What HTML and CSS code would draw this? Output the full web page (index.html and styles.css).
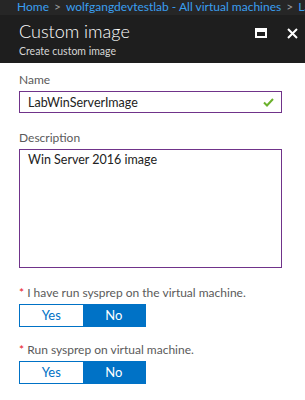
FILE: index.html
```html
<!DOCTYPE html>
<html lang="en">

<head>
    <meta charset="UTF-8">
    <meta name="viewport" content="width=device-width, initial-scale=1.0">
    <title>Custom image</title>
    <link rel="stylesheet" href="styles.css">
</head>

<body>
    <div class="crumbs">
        <span class="crumb">Home</span>
        <span class="sep">&gt;</span>
        <span class="crumb">wolfgangdevtestlab - All virtual machines</span>
        <span class="sep">&gt;</span>
        <span class="crumb">LabWinServer</span>
    </div>
    <div class="head">
        <div class="titles">
            <div class="title">Custom image</div>
            <div class="subtitle">Create custom image</div>
        </div>
        <div class="tools">
            <svg class="icon" width="12" height="10" viewBox="0 0 12 10">
                <rect x="1" y="1" width="10" height="8" fill="none" stroke="#fff" stroke-width="2"/>
                <rect x="1" y="1" width="10" height="3" fill="#fff"/>
            </svg>
            <svg class="icon" width="11" height="11" viewBox="0 0 11 11">
                <path d="M1 1L10 10M10 1L1 10" stroke="#fff" stroke-width="2"/>
            </svg>
        </div>
    </div>
    <div class="form">
        <div class="field">
            <div class="label">Name</div>
            <div class="input">
                <span>LabWinServerImage</span>
                <svg width="11" height="9" viewBox="0 0 11 9">
                    <path d="M1 4.5L4 7.5L10 1" fill="none" stroke="#6bb12c" stroke-width="2"/>
                </svg>
            </div>
        </div>
        <div class="field">
            <div class="label">Description</div>
            <div class="textarea">Win Server 2016 image</div>
        </div>
        <div class="field short">
            <div class="label"><span class="req">*</span> I have run sysprep on the virtual machine.</div>
            <div class="toggle">
                <span class="opt">Yes</span>
                <span class="opt on">No</span>
            </div>
        </div>
        <div class="field short">
            <div class="label"><span class="req">*</span> Run sysprep on virtual machine.</div>
            <div class="toggle">
                <span class="opt">Yes</span>
                <span class="opt on">No</span>
            </div>
        </div>
    </div>
</body>

</html>
```

FILE: styles.css
```css
body {
    margin: 0;
    background-color: #fff;
    font-family: Lato, "Open Sans", sans-serif;
    overflow: hidden;
}

.crumbs {
    height: 15px;
    padding-left: 17px;
    background-color: #262626;
    color: #3a9ff0;
    font-size: 12px;
    line-height: 14px;
    white-space: nowrap;
    overflow: hidden;
}

.sep {
    color: #9a9a9a;
    margin: 0 2px;
}

.head {
    height: 44px;
    padding: 4px 0 0 19px;
    background-color: #1e1e1e;
    display: flex;
    justify-content: space-between;
}

.title {
    color: #fff;
    font-size: 18px;
    font-weight: 300;
    line-height: 25px;
}

.subtitle {
    color: #d6d6d6;
    font-size: 10.5px;
    line-height: 14px;
}

.tools {
    display: flex;
    gap: 20px;
    padding: 9px 7px 0 0;
}

.form {
    padding: 9px 23px 0 19px;
}

.field {
    margin-bottom: 17px;
}

.field.short {
    margin-bottom: 15px;
}

.label {
    color: #5a5a5a;
    font-size: 12px;
    line-height: 16px;
    margin-bottom: 3px;
}

.req {
    color: #e81123;
}

.input {
    height: 20px;
    border: 1px solid #70338a;
    display: flex;
    align-items: center;
    justify-content: space-between;
    padding: 0 7px 0 8px;
    color: #222;
    font-size: 12.5px;
}

.textarea {
    height: 113px;
    border: 1px solid #70338a;
    padding: 2px 8px;
    color: #222;
    font-size: 12.5px;
    line-height: 16px;
}

.toggle {
    display: flex;
    width: 125px;
    border: 1px solid #0072c6;
}

.opt {
    flex: 1;
    height: 21px;
    line-height: 21px;
    text-align: center;
    color: #0072c6;
    font-size: 13px;
}

.opt.on {
    background-color: #0072c6;
    color: #fff;
}
```
